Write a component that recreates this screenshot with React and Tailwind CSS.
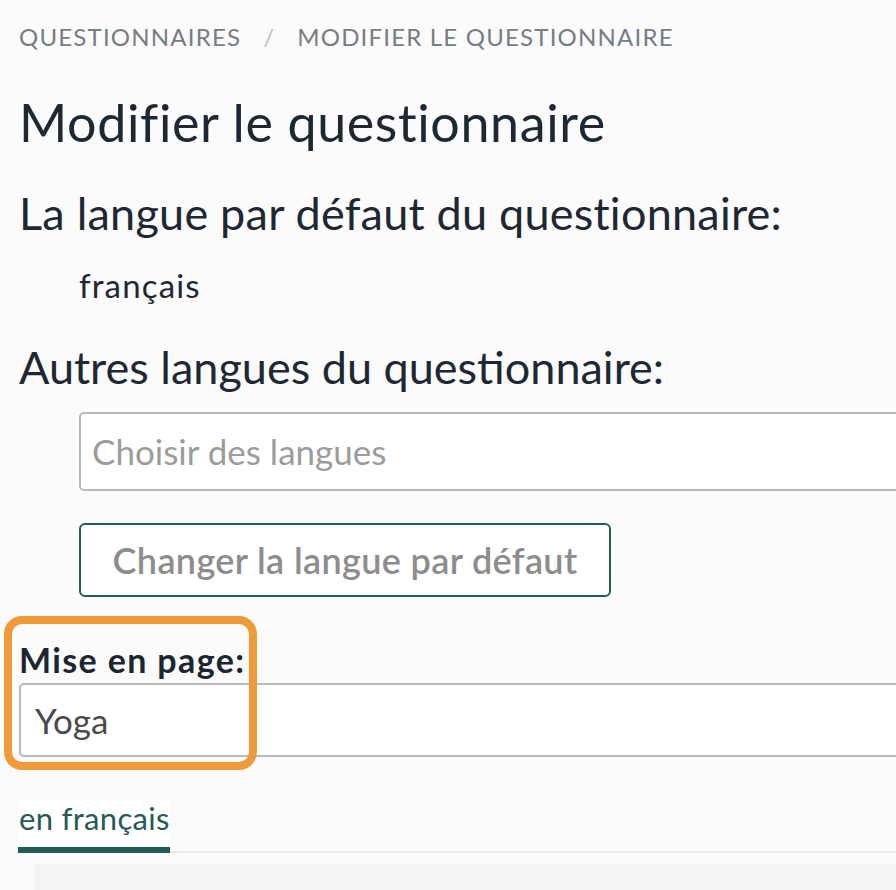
const App = () => {
    return (
        <div className="w-[896px] h-[890px] overflow-hidden bg-[#fbfbfb] font-['Lato','Noto_Sans',sans-serif] text-[#1d2833]">
            <div className="pl-[19px] pt-[22px]">
                {/* Breadcrumb */}
                <nav className="flex items-center text-[24px] leading-[30px] uppercase tracking-[0.05em] text-[#767d83]">
                    <span>Questionnaires</span>
                    <span className="mx-[22px] text-[#bcc0c4]">/</span>
                    <span>Modifier le questionnaire</span>
                </nav>

                <h1 className="mt-[40px] text-[52px] leading-[60px] font-normal tracking-[0.012em]">
                    Modifier le questionnaire
                </h1>

                <h2 className="mt-[35px] text-[45px] leading-[52px] font-normal tracking-[0.005em]">
                    La langue par défaut du questionnaire:
                </h2>
                <p className="mt-[26px] ml-[60px] text-[33px] leading-[40px] tracking-[0.035em]">
                    français
                </p>

                <h2 className="mt-[36px] text-[45px] leading-[52px] font-normal">
                    Autres langues du questionnaire:
                </h2>

                <div className="ml-[60px] mt-[19px] w-[900px] h-[79px] border-2 border-[#b5babe] rounded-[5px] bg-white flex items-center px-[11px]">
                    <span className="text-[35px] text-[#9c9c9c]">Choisir des langues</span>
                </div>

                <button className="ml-[60px] mt-[32px] w-[532px] h-[74px] border-2 border-[#245b55] rounded-[6px] bg-white text-[36px] font-semibold tracking-[0.01em] text-[#8d8d8d]">
                    Changer la langue par défaut
                </button>

                {/* Layout select, highlighted */}
                <div className="relative mt-[43px]">
                    <div className="absolute left-[-15px] top-[-24px] w-[253px] h-[154px] border-[8px] border-[#f09a38] rounded-[18px] pointer-events-none z-10"></div>
                    <label className="block text-[34px] leading-[40px] font-bold tracking-[0.04em] text-[#1b2631] whitespace-nowrap">
                        Mise en page:
                    </label>
                    <div className="mt-[3px] w-[900px] h-[74px] border-2 border-[#b5babe] rounded-[5px] bg-white flex items-center px-[14px]">
                        <span className="text-[35px] text-[#4a4a4a]">Yoga</span>
                    </div>
                </div>

                {/* Tabs */}
                <div className="mt-[43px] w-[900px] border-b-2 border-[#e8e8e8] flex">
                    <div className="bg-white border-b-[6px] border-[#245b55] mb-[-2px] pb-[11px] w-[152px] ml-[-1px] pl-[1px]">
                        <span className="block whitespace-nowrap text-[31px] leading-[36px] tracking-[0.01em] text-[#245b55]">en français</span>
                    </div>
                </div>
                <div className="ml-[15px] mt-[11px] h-[40px] bg-[#f3f4f6]"></div>
            </div>
        </div>
    );
};

export default App;
